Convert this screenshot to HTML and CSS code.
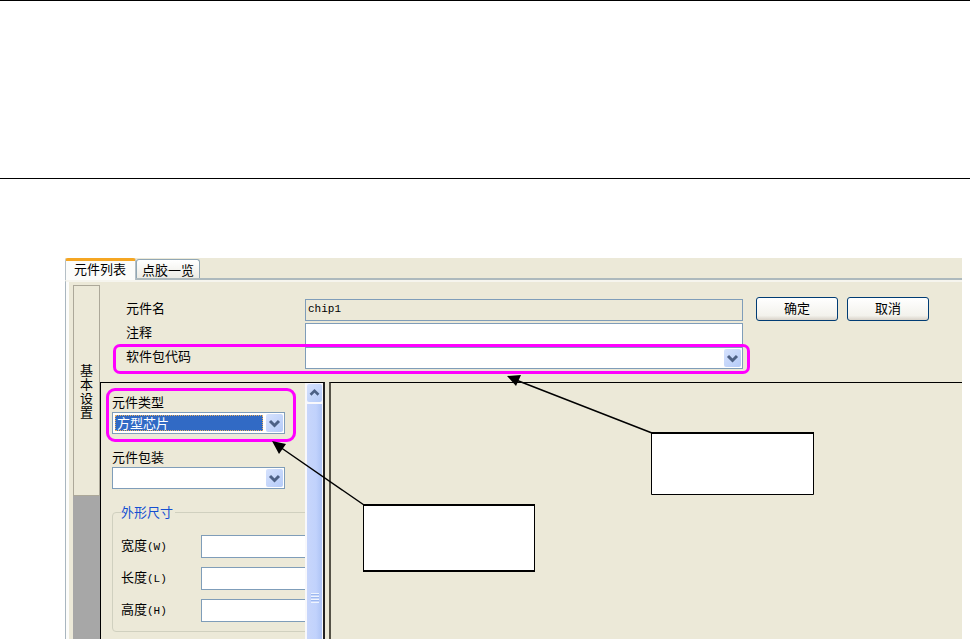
FILE: index.html
```html
<!DOCTYPE html>
<html lang="zh-CN">
<head>
<meta charset="utf-8">
<title>元件列表</title>
<link rel="stylesheet" href="styles.css">
</head>
<body>
<header class="page-head"></header>
<main class="window">
  <nav class="tabs">
    <button type="button" class="tab tab-active">元件列表</button>
    <button type="button" class="tab">点胶一览</button>
  </nav>
  <div class="tab-body">
    <aside class="side">
      <button type="button" class="side-tab">基本设置</button>
    </aside>
    <div class="content">
      <form class="form">
        <div class="fields">
          <div class="row">
            <label for="name">元件名</label>
            <input id="name" class="box readonly" type="text" value="chip1" readonly>
          </div>
          <div class="row">
            <label for="note">注释</label>
            <input id="note" class="box" type="text">
          </div>
          <div class="row marked">
            <label for="code">软件包代码</label>
            <div class="box combo">
              <select id="code"><option></option></select>
              <svg class="drop" viewBox="0 0 17 18"><path d="M4 7l4.500 4.500L13 7"/></svg>
            </div>
          </div>
        </div>
        <div class="actions">
          <button type="button" class="push">确定</button>
          <button type="button" class="push">取消</button>
        </div>
      </form>
      <div class="panes">
        <section class="pane pane-left">
          <div class="props">
            <div class="prop marked marked-type">
              <label for="type">元件类型</label>
              <div class="box combo">
                <select id="type" class="selected"><option>方型芯片</option></select>
                <svg class="drop" viewBox="0 0 17 18"><path d="M4 7l4.500 4.500L13 7"/></svg>
              </div>
            </div>
            <div class="prop">
              <label for="pack">元件包装</label>
              <div class="box combo">
                <select id="pack"><option></option></select>
                <svg class="drop" viewBox="0 0 17 18"><path d="M4 7l4.500 4.500L13 7"/></svg>
              </div>
            </div>
            <fieldset class="group">
              <legend>外形尺寸</legend>
              <div class="dim"><label for="w">宽度<span class="mono">(W)</span></label><input id="w" class="box" type="text"></div>
              <div class="dim"><label for="l">长度<span class="mono">(L)</span></label><input id="l" class="box" type="text"></div>
              <div class="dim"><label for="h">高度<span class="mono">(H)</span></label><input id="h" class="box" type="text"></div>
            </fieldset>
          </div>
          <div class="scroll">
            <svg class="drop up" viewBox="0 0 17 18"><path d="M4 11l4.500-4.500L13 11"/></svg>
            <div class="thumb"><span class="grip"></span></div>
          </div>
        </section>
        <section class="pane pane-right"></section>
      </div>
    </div>
  </div>
</main>
<svg class="notes" viewBox="0 0 970 639" aria-hidden="true">
  <path class="leader" d="M652 433L516 380M364 505L280 447"/>
  <path d="M507 376L521 375L516 386ZM272 441L286 444L279 454Z"/>
  <path class="callout" d="M651.500 433H813.500V494.500H651.500ZM363.500 505H534.500V571H363.500Z"/>
  <path class="thick" d="M651 433H814M363 505H535M363 571H535"/>
</svg>
</body>
</html>
```
FILE: styles.css
```css
* { box-sizing: border-box; }

body {
  margin: 0;
  height: 100vh;
  display: flex;
  flex-direction: column;
  position: relative;
  overflow: hidden;
  background: #fff;
  color: #000;
  font: 13px/16px "Noto Sans CJK SC", sans-serif;
}

button, input, select { font: inherit; color: inherit; margin: 0; }

.page-head {
  flex: none;
  height: 179px;
  border-top: 1px solid #000;
  border-bottom: 1px solid #000;
}

.window {
  flex: 1;
  min-height: 0;
  margin: 79px 8px 0 65px;
  display: flex;
  flex-direction: column;
  background: #ece9d8;
}

.tabs {
  flex: none;
  display: flex;
  align-items: flex-end;
  height: 22px;
  border-bottom: 2px solid #adb9bd;
}

.tab {
  height: 19px;
  padding: 2px 5px 0;
  border: 1px solid #91a7b4;
  border-bottom: 0;
  border-radius: 3px 3px 0 0;
  background: linear-gradient(#fff, #ecebe4);
}

.tab-active {
  height: 22px;
  padding: 0 9px 4px 8px;
  margin-bottom: -2px;
  border: 1px solid #b5bfc6;
  border-top: 3px solid #f5a623;
  border-bottom: 0;
  background: #fcfcfa;
}

.tab-body {
  flex: 1;
  min-height: 0;
  display: flex;
  border-left: 1px solid #a9b6bf;
  border-top: 2px solid #f6f5ee;
  box-shadow: inset 3px 0 #fcfcfa;
}

.side {
  flex: none;
  width: 27px;
  margin: 3px 0 0 7px;
  background: #a7a7a7;
}

.side-tab {
  display: block;
  width: 27px;
  height: 211px;
  padding: 0 6px;
  border: 1px solid #aca899;
  background: #ece9d8;
  line-height: 14px;
}

.content {
  flex: 1;
  min-width: 0;
  display: flex;
  flex-direction: column;
}

.form {
  display: flex;
  gap: 13px;
  padding: 17px 33px 13px 26px;
}

.fields {
  flex: 1;
  display: flex;
  flex-direction: column;
  gap: 2px;
}

.row { display: flex; align-items: center; }
.row label { flex: none; width: 179px; padding-bottom: 4px; }
.row .box { flex: 1; min-width: 0; }

.box {
  display: block;
  height: 22px;
  padding: 0 2px;
  border: 1px solid #7f9db9;
  border-radius: 0;
  background: #fff;
  outline: 0;
}

.readonly {
  padding-bottom: 2px;
  background: #ece9d8;
  font-family: "Liberation Mono", monospace;
  font-size: 11px;
}

.combo { display: flex; align-items: center; padding: 1px 1px 1px 2px; }

.combo select {
  flex: 1;
  min-width: 0;
  height: 16px;
  padding: 0 1px;
  border: 0;
  border-radius: 0;
  appearance: none;
  background: transparent;
  outline: 0;
  line-height: 14px;
}

.combo .selected {
  margin-right: 3px;
  border: 1px dotted #e8b060;
  background: #316ac5;
  color: #fff;
}

.drop {
  flex: none;
  width: 17px;
  height: 18px;
  border-radius: 2px;
  background: linear-gradient(135deg, #d6e2fd, #b5cbf8);
  fill: none;
  stroke: #4d6185;
  stroke-width: 3;
  pointer-events: none;
}

.marked { position: relative; }

.marked::after {
  content: "";
  position: absolute;
  inset: -3px -7px -5px -13px;
  border: 3px solid #f0f;
  border-radius: 7px;
  pointer-events: none;
}

.marked-type::after { inset: -6px -11px -8px -6px; border-radius: 9px; }

.actions { display: flex; align-items: flex-start; gap: 9px; margin-top: -2px; }

.push {
  width: 82px;
  height: 24px;
  padding: 0 0 2px;
  border: 1px solid #003c74;
  border-radius: 3px;
  background: linear-gradient(#fff, #f3f2ec 80%, #d8d2c8);
}

.panes { flex: 1; min-height: 0; display: flex; gap: 4px; }

.pane { border-top: 1px solid #000; border-left: 2px solid #000; }

.pane-left {
  flex: none;
  width: 225px;
  display: flex;
  border-left-width: 1px;
  border-right: 2px solid #222;
}

.pane-right { flex: 1; border-left-color: #555247; }

.props {
  flex: 1;
  min-width: 0;
  overflow: hidden;
  padding: 11px 0 0 11px;
}

.prop { width: 173px; margin-bottom: 15px; }
.prop label { display: block; margin-bottom: 2px; }

.group {
  width: 220px;
  margin: 0;
  padding: 15px 0 9px 8px;
  border: 1px solid #d0d0bf;
  border-radius: 4px;
}

.group legend { padding: 0 2px 0 0; color: #1450d2; }

.dim { display: flex; align-items: center; margin-bottom: 9px; }
.dim:last-child { margin-bottom: 0; }
.dim label { flex: none; width: 80px; padding-bottom: 2px; }
.dim .box { flex: 1; min-width: 0; height: 23px; }

.mono { font: 11px/16px "Liberation Mono", monospace; }

.scroll {
  flex: none;
  width: 18px;
  display: flex;
  flex-direction: column;
  gap: 2px;
  padding: 1px 1px 0 2px;
  background: #f8f8fc;
}

.scroll .up { width: 15px; }

.thumb {
  flex: 1;
  display: flex;
  justify-content: center;
  padding-top: 189px;
  background: linear-gradient(90deg, #c8d6fb, #c1d2fc 60%, #adc3f5);
}

.grip {
  width: 8px;
  height: 10px;
  background: repeating-linear-gradient(#eef4fe 0 1px, #9cb8f0 1px 2px, #c8d6fb 2px 3px);
}

.notes {
  position: absolute;
  top: 0;
  left: 0;
  width: 970px;
  height: 639px;
  pointer-events: none;
}

.leader { stroke: #000; stroke-width: 1.5px; }
.callout { fill: #fff; stroke: #000; }
.thick { stroke: #000; stroke-width: 2px; }
```
